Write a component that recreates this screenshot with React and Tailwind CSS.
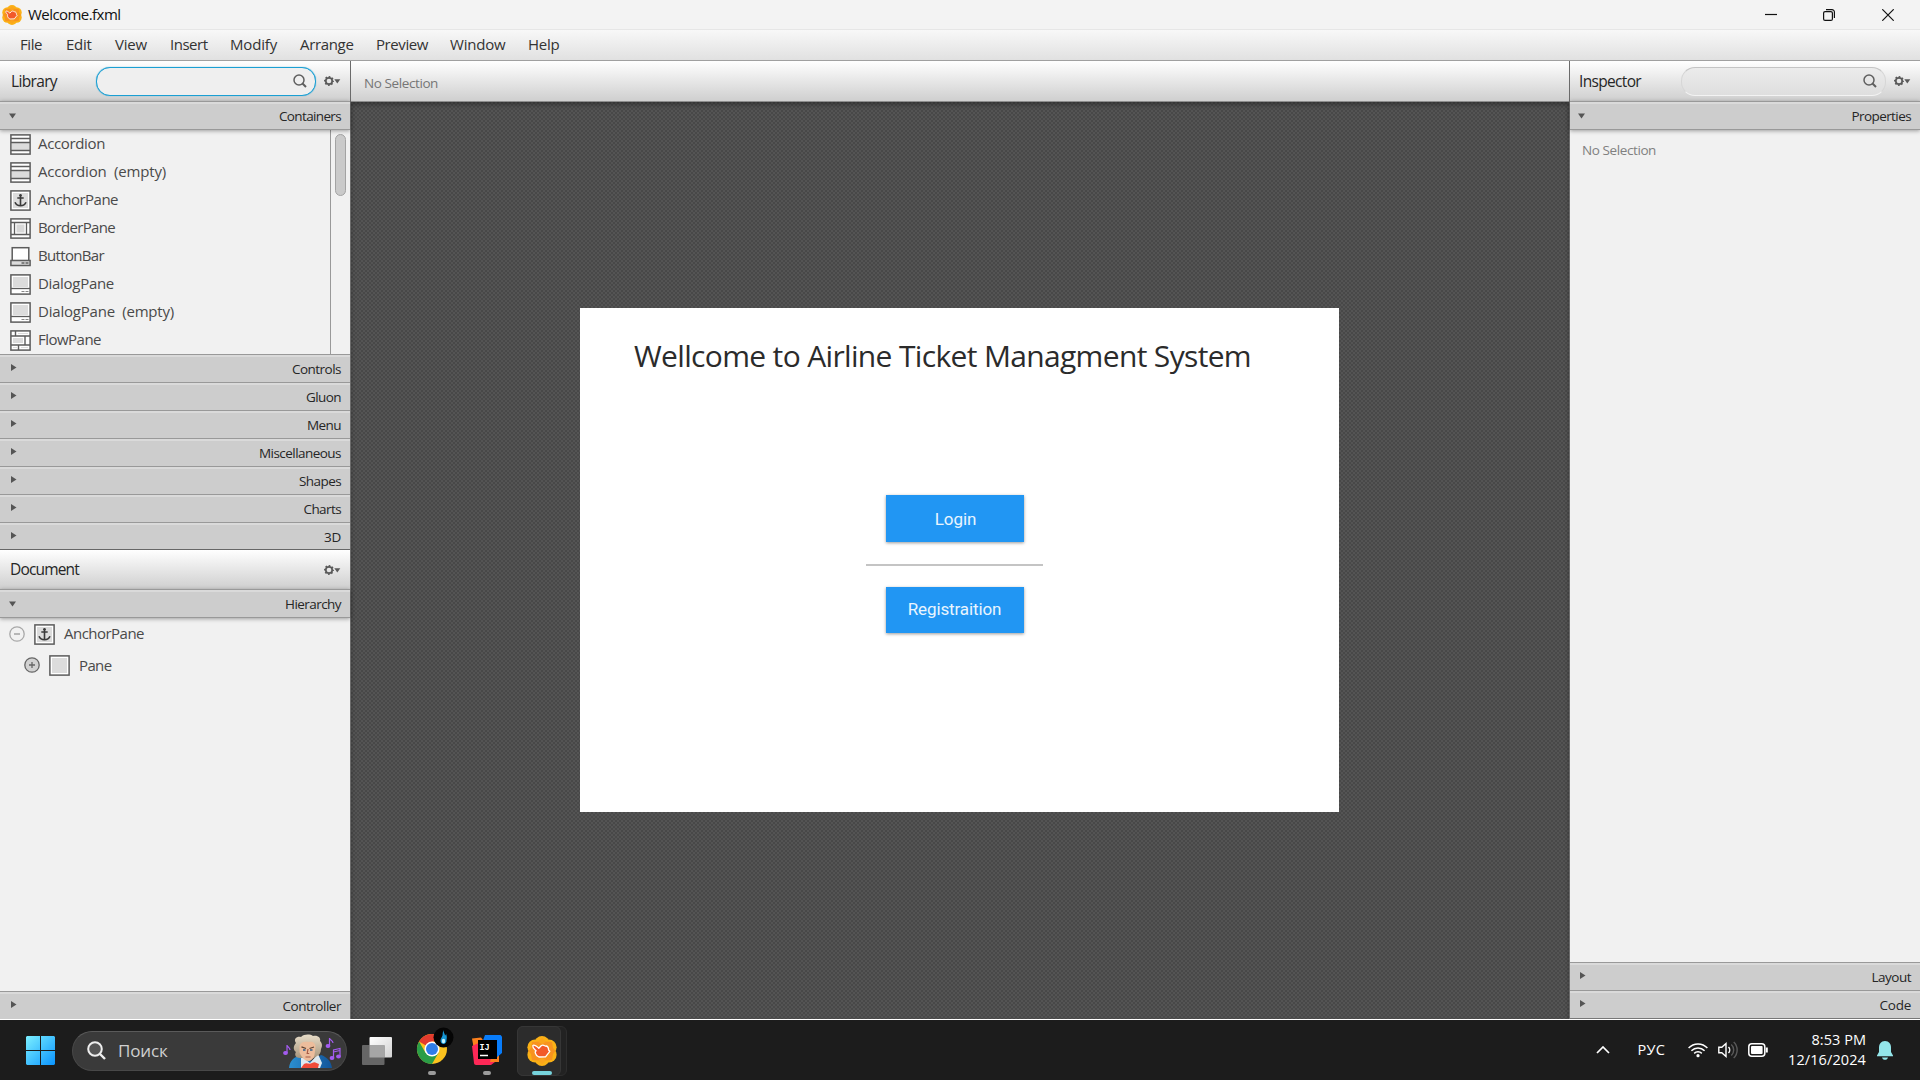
import { useLayoutEffect, useRef, useState } from "react";

/* Text whose tracking is adjusted so that it spans a given width. */
function Label({ w, className = "", children }) {
  const ref = useRef(null);
  const [spacing, setSpacing] = useState(0);
  useLayoutEffect(() => {
    const natural = ref.current.getBoundingClientRect().width;
    setSpacing((w - natural) / children.length);
  }, [w, children]);
  return (
    <span ref={ref} className={`whitespace-pre ${className}`} style={{ letterSpacing: `${spacing}px` }}>
      {children}
    </span>
  );
}

function SceneLogo({ className }) {
  return (
    <svg viewBox="0 0 30 30" className={className}>
      <g fill="#fbb116">
        <circle cx="15" cy="7.600" r="7.600" />
        <circle cx="21.800" cy="11.200" r="7.800" />
        <circle cx="21.800" cy="18.800" r="7.800" />
        <circle cx="15" cy="22.400" r="7.600" />
        <circle cx="8.200" cy="18.800" r="7.800" />
        <circle cx="8.200" cy="11.200" r="7.800" />
      </g>
      <path d="M15 3l3.500 2.500 6.500.5 1 6 2.500 3-2.500 3-1 6-6.500.5L15 27l-3.500-2.500L5 24l-1-6-2.500-3L4 12l1-6 6.500-.5z" fill="#f8931f" />
      <path d="M15 1.500l4 4.500-4 2-4-2zM15 28.500l4-4.500-4-2-4 2z" fill="#fba51c" />
      <path
        d="M5.800 9.600c1.200-1.200 2.600-.3 6 2.600l2.600-2.700c1.800-1 3 .2 4 .6 2-.5 3.300 1.600 3.200 3.900l1.200 1.300-4.300 5.500-6.600.2c-2.200-1.200-3.200-2.500-3.400-3.700-.7-1.200 0-2.200.6-2.500-1.500-1.500-3.700-2.900-3.300-5.200z"
        fill="#f2592a"
        stroke="#fff"
        strokeWidth="1.300"
        strokeLinejoin="round"
      />
    </svg>
  );
}

function SearchGlyph() {
  return (
    <svg viewBox="0 0 14 14" className="size-3.5" fill="none" stroke="#5f5f5f" strokeWidth="1.500">
      <circle cx="6" cy="6" r="5" />
      <path d="M9.500 9.500L13 13" strokeWidth="1.900" />
    </svg>
  );
}

function GearMenu() {
  return (
    <svg viewBox="0 0 17 10" className="h-2.5 w-[17px] shrink-0">
      <circle cx="5" cy="5" r="3.200" fill="none" stroke="#5a5a5a" strokeWidth="1.700" />
      <circle cx="5" cy="5" r="4.300" fill="none" stroke="#5a5a5a" strokeWidth="1.400" strokeDasharray="1.700 1.677" strokeDashoffset=".85" />
      <path d="M10.300 3.200h6L13.300 7.500z" fill="#5a5a5a" />
    </svg>
  );
}

function AnchorMark() {
  return (
    <g>
      <rect x="3" y="3" width="15" height="15" fill="#dcdcdc" />
      <path d="M10.500 5v10.500M7.300 8h6.400M5 12.300c1 2.400 2.700 3.400 5.500 3.400s4.500-1 5.500-3.400" fill="none" stroke="#3a3a3a" strokeWidth="1.600" />
      <circle cx="10.500" cy="5.200" r="1.300" fill="#3a3a3a" />
    </g>
  );
}

function NodeIcon({ kind }) {
  const dark = "#5c5c5c";
  return (
    <svg viewBox="0 0 21 21" className="size-[21px] shrink-0">
      {kind !== "buttonbar" && <rect x=".9" y=".9" width="19.200" height="19.200" fill="#fff" stroke={dark} strokeWidth="1.500" />}
      {kind === "accordion" && (
        <g>
          <rect x="2" y="9" width="17" height="7" fill="#dcdcdc" />
          <path d="M1 4.500h19M1 8.500h19M1 16.500h19" stroke={dark} strokeWidth="1.300" />
        </g>
      )}
      {kind === "anchor" && <AnchorMark />}
      {kind === "border" && (
        <g>
          <rect x="6.500" y="6.500" width="8" height="8" fill="#d8d8d8" />
          <path d="M1 4.500h19M1 16.500h19M4.500 4.500v12M16.500 4.500v12" stroke={dark} strokeWidth="1.300" />
        </g>
      )}
      {kind === "buttonbar" && (
        <g>
          <rect x="2.200" y="1.700" width="16.600" height="13" fill="#fff" stroke={dark} strokeWidth="1.500" />
          <rect x=".9" y="14.500" width="19.200" height="5" fill="#dcdcdc" stroke={dark} strokeWidth="1.500" />
          <path d="M11.500 17h3M15.500 17h3" stroke="#222" />
        </g>
      )}
      {kind === "dialog" && (
        <g>
          <rect x="3" y="3" width="15" height="10" fill="#dcdcdc" />
          <path d="M1 14.500h19" stroke={dark} strokeWidth="1.300" />
          <path d="M11.500 17.500h3M15.500 17.500h3" stroke="#888" />
        </g>
      )}
      {kind === "flow" && (
        <g>
          <rect x="3" y="8" width="10" height="5" fill="#dcdcdc" />
          <path d="M1 6h19M1 15h19M5.500 1v5M15 6v9M8.500 15v5" stroke={dark} strokeWidth="1.400" />
          <path d="M8 3.500h10M3 17.500h4M11 17.500h7" stroke="#dcdcdc" />
        </g>
      )}
      {kind === "pane" && <rect x="3" y="3" width="15" height="15" fill="#dcdcdc" />}
    </svg>
  );
}

function Bar({ title, w, open, tight }) {
  return (
    <div
      className={`flex shrink-0 items-center justify-between border-t border-[#999] bg-[linear-gradient(#dadada_2px,#cdcdcd_2px)] pr-[9px] ${
        open ? "relative h-[29px] border-b shadow-[0_1px_4px_rgba(0,0,0,0.35)]" : "h-7"
      } ${tight ? "pl-0" : "pl-px"}`}
    >
      {open ? (
        <svg viewBox="0 0 7 6" className="ml-2 h-1.5 w-[7px]">
          <path d="M0 .5h7L3.500 5.500z" fill="#555" />
        </svg>
      ) : (
        <svg viewBox="0 0 6 7" className="-mt-[2px] ml-2.5 h-[7px] w-1.5">
          <path d="M0 0v7L5.500 3.500z" fill="#555" />
        </svg>
      )}
      <Label w={w} className="text-[13.5px] leading-6 text-[#262626]">
        {title}
      </Label>
    </div>
  );
}

const menus = [
  ["File", 22, "w-[46px]"],
  ["Edit", 25.5, "w-[49px]"],
  ["View", 32, "w-[55px]"],
  ["Insert", 37.5, "w-[60px]"],
  ["Modify", 47, "w-[70px]"],
  ["Arrange", 53.5, "w-[76px]"],
  ["Preview", 52, "w-[74px]"],
  ["Window", 55.5, "w-[78px]"],
  ["Help", 31.5, "w-[54px]"],
];

const containers = [
  ["Accordion", 67, "accordion"],
  ["Accordion  (empty)", 128, "accordion"],
  ["AnchorPane", 80, "anchor"],
  ["BorderPane", 77, "border"],
  ["ButtonBar", 66, "buttonbar"],
  ["DialogPane", 76, "dialog"],
  ["DialogPane  (empty)", 136, "dialog"],
  ["FlowPane", 63, "flow"],
];

const sections = [
  ["Controls", 49],
  ["Gluon", 35],
  ["Menu", 34],
  ["Miscellaneous", 82],
  ["Shapes", 42],
  ["Charts", 37.5],
  ["3D", 17],
];

function Library() {
  return (
    <section className="flex h-[488px] flex-col">
      <div className="flex h-10 shrink-0 items-center bg-linear-to-b from-white to-[#cfcfcf] pl-[11px]">
        <Label w={46} className="pt-[2px] text-[15.5px] text-[#262626]">Library</Label>
        <div className="ml-[39px] flex h-[29px] w-[220px] items-center justify-end rounded-[14px] border-[1.5px] border-[#1b9fd3] bg-[#efefef] pr-2 shadow-[0_0_1px_#1b9fd3]">
          <SearchGlyph />
        </div>
        <div className="ml-[8px] flex"><GearMenu /></div>
      </div>
      <Bar title="Containers" w={62} open />
      <div className="flex h-56 shrink-0">
        <ul className="flex-1 overflow-hidden pl-2.5">
          {containers.map(([name, w, kind], i) => (
            <li key={i} className="flex h-7 items-center gap-[7px]">
              <NodeIcon kind={kind} />
              <Label w={w} className="pb-px text-[15px] text-[#4a4a4a]">{name}</Label>
            </li>
          ))}
        </ul>
        <div className="w-5 border-l border-[#999] pt-1 pl-1">
          <div className="h-[62px] w-[11px] rounded-full border border-[#a3a3a3] bg-[#cacaca]" />
        </div>
      </div>
      {sections.map(([t, w]) => (
        <Bar key={t} title={t} w={w} />
      ))}
    </section>
  );
}

function Doc() {
  return (
    <section className="flex flex-1 flex-col border-t border-[#666]">
      <div className="flex h-[39px] shrink-0 items-center justify-between bg-linear-to-b from-white to-[#cfcfcf] pr-[9px] pl-[10px]">
        <Label w={69} className="pt-px text-[15.5px] text-[#262626]">Document</Label>
        <GearMenu />
      </div>
      <Bar title="Hierarchy" w={56} open />
      <div className="flex-1 pl-[9px]">
        <div className="flex h-8 items-center">
          <svg viewBox="0 0 16 16" className="size-4" fill="none" stroke="#a8a8a8" strokeWidth="1.300">
            <circle cx="8" cy="8" r="7.200" />
            <path d="M5 8h6" strokeWidth="1.600" />
          </svg>
          <span className="ml-[9px]"><NodeIcon kind="anchor" /></span>
          <Label w={80} className="ml-[9px] pb-px text-[15px] text-[#4a4a4a]">AnchorPane</Label>
        </div>
        <div className="flex h-[30px] items-center pl-[15px]">
          <svg viewBox="0 0 16 16" className="size-4" fill="#d2d2d2" stroke="#666" strokeWidth="1.300">
            <circle cx="8" cy="8" r="7.200" />
            <path d="M5 8h6M8 5v6" />
          </svg>
          <span className="ml-[9px]"><NodeIcon kind="pane" /></span>
          <Label w={32.500} className="ml-[9px] text-[15px] text-[#4a4a4a]">Pane</Label>
        </div>
      </div>
      <Bar title="Controller" w={58.500} />
    </section>
  );
}

function Stage() {
  return (
    <main className="flex flex-1 flex-col border-x border-[#6b6b6b]">
      <div className="flex h-[41px] items-center border-b border-[#8d8d8d] bg-linear-to-b from-white to-[#cfcfcf] pt-1 pl-[13px]">
        <Label w={74} className="text-[13.5px] text-[#767676]">No Selection</Label>
      </div>
      <div className="flex-1 bg-[conic-gradient(#484848_25%,#545454_0_50%,#484848_0_75%,#545454_0)] bg-[length:4px_4px] pt-[206px] pl-[229px] shadow-[inset_0_3px_4px_rgba(0,0,0,0.3)]">
        <div className="flex h-[504px] w-[759px] flex-col bg-white">
          <h1 className="flex h-[95px] items-center pl-[54px]">
            <Label w={617} className="text-[30px] text-[#2b2b2b]">Wellcome to Airline Ticket Managment System</Label>
          </h1>
          <div className="mt-[92px] ml-[286px] flex w-[177px] flex-col items-center">
            <button className="h-[47px] w-[138px] bg-[#2196f3] pt-0.5 pl-0.5 font-['Roboto',sans-serif] shadow-[0_1px_3px_rgba(0,0,0,0.4)]">
              <Label w={41.5} className="text-[17px] text-white/90">Login</Label>
            </button>
            <div className="mt-[22px] h-0.5 w-full bg-[#c4c4c4]" />
            <button className="mt-[21px] h-[46px] w-[138px] bg-[#2196f3] font-['Roboto',sans-serif] shadow-[0_1px_3px_rgba(0,0,0,0.4)]">
              <Label w={93.5} className="text-[17px] text-white/90">Registraition</Label>
            </button>
          </div>
        </div>
      </div>
    </main>
  );
}

function Inspector() {
  return (
    <aside className="flex w-[350px] flex-col border-b border-[#777]">
      <div className="flex h-10 shrink-0 items-center bg-linear-to-b from-white to-[#cfcfcf] pl-[9px]">
        <Label w={62} className="pt-[2px] text-[15.5px] text-[#262626]">Inspector</Label>
        <div className="ml-[40px] flex h-[29px] w-[205px] items-center justify-end rounded-[14px] border border-t-[#c4c4c4] border-r-[#d6d6d6] border-b-[#f3f3f3] border-l-[#d6d6d6] bg-linear-to-b from-[#ececec] to-[#dedede] pr-2">
          <SearchGlyph />
        </div>
        <div className="ml-[8px] flex"><GearMenu /></div>
      </div>
      <Bar title="Properties" w={59.500} open tight />
      <div className="flex flex-1 items-start pt-[10px] pl-3">
        <Label w={74} className="text-[13.5px] leading-5 text-[#808080]">No Selection</Label>
      </div>
      <Bar title="Layout" w={39.500} tight />
      <Bar title="Code" w={31.500} tight />
    </aside>
  );
}

function Composer() {
  return (
    <svg viewBox="0 0 60 36" className="h-9 w-[60px]">
      <defs>
        <linearGradient id="coat" x1="0" x2="1">
          <stop offset="0" stopColor="#2b8fd0" />
          <stop offset="1" stopColor="#12559a" />
        </linearGradient>
        <linearGradient id="hair" x1="0" x2="0" y1="0" y2="1">
          <stop offset="0" stopColor="#e8dcc8" />
          <stop offset="1" stopColor="#a8967c" />
        </linearGradient>
      </defs>
      <path d="M6 35c1-8 5-10 9-12l13 5 10-6c6 2 10 6 11 13z" fill="url(#coat)" />
      <path d="M18 35l0-12 9 7 8-9 4 9-2 5z" fill="#dfe9f0" />
      <path d="M18 35l3-4c3-2 5 1 8-1s4 0 7 1l-1 4z" fill="#f04b3a" />
      <path d="M13 10c-3-4 1-7 5-6 3-3 9-3 12-1 5-1 8 2 7 5 3 3 2 6 1 8 0 4-2 6-4 7l-3 2H17c-4 0-6-3-4-6-3-2-3-6 0-9z" fill="url(#hair)" />
      <path d="M16.500 13c1-4 5-5 9-4 4-1 7 1 7 5l-1 8c-1 4-4 6-6 6-4 0-8-5-9-9z" fill="#edbd9c" />
      <path d="M18.500 13.800l4.500 1.700M26.500 15.500l4.500-1.500" stroke="#5c4030" strokeWidth="1.300" />
      <path d="M20 17h2.500M27 17h2.500" stroke="#2f5f8c" strokeWidth="1.400" />
      <path d="M25 16l-.8 4.500h2M22.500 24h5" stroke="#a85c46" fill="none" strokeWidth="1.200" />
      <g fill="#a45cf0" stroke="#a45cf0" strokeWidth="1.200">
        <ellipse cx="2.500" cy="20" rx="1.800" ry="1.400" />
        <path d="M4 20v-8c0 2 3 2 3 5" fill="none" />
        <ellipse cx="45" cy="13" rx="1.800" ry="1.400" />
        <path d="M46.500 13V5c0 2 3.500 2 3.500 5" fill="none" />
        <ellipse cx="49" cy="25" rx="1.800" ry="1.400" />
        <ellipse cx="55.500" cy="23.500" rx="1.800" ry="1.400" />
        <path d="M50.500 25v-8l6.500-1.500v8M50.500 19l6.500-1.500" fill="none" />
      </g>
    </svg>
  );
}

function Chrome() {
  return (
    <svg viewBox="0 0 38 38" className="h-[38px] w-[38px]">
      <circle cx="16" cy="23" r="15" fill="#fcc31e" />
      <path d="M16 23L3 15.500A15 15 0 0 1 29 15.500H16z" fill="#e33b2e" />
      <path d="M3 15.500A15 15 0 0 0 16 38l6.500-11.200L16 23 9.500 26.800z" fill="#2a9d47" />
      <circle cx="16" cy="23" r="7.500" fill="#fff" />
      <circle cx="16" cy="23" r="6" fill="#2f7de9" />
      <circle cx="27.500" cy="11.500" r="10" fill="#050505" />
      <path d="M28 4c-1 2 1 4 1 5.500 1-.5 1-1.500 1-2 1 3 1 4 .5 6.500.3 2-1.200 4-3 4s-3-1.500-3-3.500c0-2 1.500-3 2-5 .5-2-.3-3 1.500-5.500z" fill="#1597d6" />
      <ellipse cx="27.500" cy="15" rx="1.700" ry="2.200" fill="#c5f3ff" />
    </svg>
  );
}

function Idea() {
  return (
    <svg viewBox="0 0 30 30" className="size-[30px]">
      <path d="M0 3.500l9-1 4 5-1 18-9-5z" fill="#fc801d" />
      <path d="M0 11l11-5 12 21-4 3H4c-1 0-2-1-2-2z" fill="#fe2857" />
      <path d="M20 20h7v7h-9z" fill="#fc801d" />
      <path d="M13 0h15.500L30 1.500V18l-6 5L10 8z" fill="#087cfa" />
      <rect x="6" y="5" width="19" height="19" fill="#000" />
      <path d="M8 20.500h8" stroke="#fff" strokeWidth="1.500" />
      <text x="7.400" y="14.500" fill="#fff" fontSize="8.500" fontWeight="700" fontFamily="Liberation Mono, monospace">IJ</text>
    </svg>
  );
}

function Taskbar() {
  return (
    <footer className="flex h-[60px] items-center justify-between bg-[#1c1c1c] text-white">
      <div className="flex items-center pt-px">
        <svg viewBox="0 0 29 29" className="ml-[26px] size-[29px]">
          <defs>
            <linearGradient id="win" x1="0" y1="0" x2="1" y2="1">
              <stop offset="0" stopColor="#7cf0ff" />
              <stop offset="1" stopColor="#0a94ff" />
            </linearGradient>
          </defs>
          <path d="M1 0h13v14H0V1zM15 0h13l1 1v13H15zM0 15h14v14H1l-1-1zM15 15h14v13l-1 1H15z" fill="url(#win)" />
        </svg>
        <div className="ml-[17px] flex h-10 w-[275px] items-center rounded-full border border-t-[#5a5a5a] border-r-[#484848] border-b-[#484848] border-l-[#484848] bg-[#3a3a3a] pl-[14px]">
          <svg viewBox="0 0 19 19" className="size-[19px]" fill="#555" stroke="#eee" strokeWidth="2">
            <circle cx="8" cy="8" r="6.800" />
            <path d="M13 13l5 5" strokeWidth="2.400" />
          </svg>
          <Label w={49.500} className="ml-3 text-[17px] text-[#d0d0d0]">Поиск</Label>
          <div className="ml-[115px]"><Composer /></div>
        </div>
        <svg viewBox="0 0 30 28" className="ml-[15px] h-7 w-[30px]">
          <defs>
            <linearGradient id="tv" x1="0" y1="0" x2="1" y2="1">
              <stop offset="0" stopColor="#fff" />
              <stop offset="1" stopColor="#d2d2d2" />
            </linearGradient>
          </defs>
          <rect x="7.500" width="22.500" height="20.500" rx="1" fill="url(#tv)" />
          <rect y="8" width="22.500" height="20" rx="1" fill="#666" />
          <path d="M7.500 8h15v12.500h-15z" fill="#a6a6a6" />
        </svg>
        <div className="ml-6 flex h-[50px] w-[38px] flex-col justify-between pb-px">
          <Chrome />
          <span className="ml-[12px] h-1 w-2 rounded-full bg-[#9b9b9b]" />
        </div>
        <div className="ml-[18px] flex h-[50px] w-[30px] flex-col items-center justify-between pt-[9px] pb-px">
          <Idea />
          <span className="h-1 w-2 rounded-full bg-[#9b9b9b]" />
        </div>
        <div className="ml-[15px] flex h-[50px] w-[50px] rounded-md border border-[#2d2d2d] bg-[#222]">
          <div className="-mt-px -ml-px flex h-[50px] w-11 flex-col items-center justify-between rounded-md border border-[#363636] bg-[#2c2c2c] pt-[9px] pl-[5px]">
            <SceneLogo className="size-[30px]" />
            <span className="h-1 w-5 rounded-full bg-[#76d3dc]" />
          </div>
        </div>
      </div>
      <div className="flex items-center pr-[27px]">
        <svg viewBox="0 0 14 8" className="h-2 w-3.5" fill="none" stroke="#fff" strokeWidth="1.700">
          <path d="M1 7l6-6 6 6" />
        </svg>
        <Label w={27.500} className="ml-[28px] text-[14.5px]">РУС</Label>
        <svg viewBox="0 0 20 16" className="ml-[23px] h-4 w-5" fill="none" stroke="#fff" strokeWidth="1.500">
          <path d="M.6 6a13 13 0 0 1 18.800 0M3.400 8.800a9.200 9.200 0 0 1 13.200 0M6.200 11.400a5.400 5.400 0 0 1 7.600 0" />
          <circle cx="10" cy="13.700" r="1.600" fill="#fff" stroke="none" />
        </svg>
        <svg viewBox="0 0 20 18" className="ml-[10px] h-[18px] w-5" fill="none" stroke="#fff" strokeWidth="1.400">
          <path d="M.8 6.300h3L8 2.500v13l-4.200-3.800h-3zM10.500 6a4.300 4.300 0 0 1 0 6" />
          <path d="M13.300 3.500a7.500 7.500 0 0 1 0 11M15.700 1a11 11 0 0 1 0 16" stroke="#5a5a5a" />
        </svg>
        <svg viewBox="0 0 20 14" className="ml-[10px] h-3.5 w-5" fill="none" stroke="#fff" strokeWidth="1.500">
          <rect x=".8" y=".8" width="16" height="12.400" rx="3" />
          <rect x="3" y="3" width="11.600" height="8" rx="1" fill="#fff" stroke="none" />
          <path d="M18.800 4.500v5" strokeWidth="2" />
        </svg>
        <div className="ml-[20px] flex w-[78px] flex-col items-end pb-px text-[14.500px] leading-5">
          <Label w={54.500}>8:53 PM</Label>
          <Label w={78}>12/16/2024</Label>
        </div>
        <svg viewBox="0 0 16 19" className="ml-[11px] h-[19px] w-4" fill="#93e6ea">
          <path d="M8 0c4 0 6 3 6 6.500V11l2 3.500v.8H0v-.8L2 11V6.500C2 3 4 0 8 0zM5 16.500h6c-.5 1.600-1.500 2.300-3 2.300s-2.500-.7-3-2.300z" />
        </svg>
      </div>
    </footer>
  );
}

export default function App() {
  return (
    <div className="flex h-[1080px] w-[1920px] flex-col overflow-hidden bg-[#f1f1f1] font-['Open_Sans','Noto_Sans',sans-serif]">
      <header className="flex h-[29px] shrink-0 items-center justify-between bg-[#f3f3f3]">
        <div className="flex items-center">
          <SceneLogo className="ml-0.5 size-5" />
          <Label w={92.5} className="ml-1.5 pb-px text-[15px] text-[#111]">Welcome.fxml</Label>
        </div>
        <div className="flex items-center pr-[26px] text-[#111]">
          <svg viewBox="0 0 12 12" className="mr-[46px] size-3" stroke="currentColor" fill="none">
            <path d="M0 5.500h12" strokeWidth="1.200" />
          </svg>
          <svg viewBox="0 0 12 12" className="mr-[47px] size-3" stroke="currentColor" fill="none" strokeWidth="1.200">
            <rect x=".6" y="2.600" width="8.800" height="8.800" rx="1.500" />
            <path d="M3 .6h6a2.400 2.400 0 0 1 2.400 2.400v6" />
          </svg>
          <svg viewBox="0 0 12 12" className="size-3" stroke="currentColor" fill="none" strokeWidth="1.200">
            <path d="M.3.300l11.400 11.400M11.700.300L.3 11.700" />
          </svg>
        </div>
      </header>
      <nav className="flex h-8 shrink-0 items-center border-t border-b border-t-[#e6e6e6] border-b-[#a0a0a0] bg-linear-to-b from-[#f8f8f8] to-[#e1e1e1] pb-0.5 pl-5 text-[15px] text-[#333]">
        {menus.map(([name, w, cell]) => (
          <div key={name} className={cell}>
            <Label w={w}>{name}</Label>
          </div>
        ))}
      </nav>
      <div className="flex h-[958px] shrink-0">
        <aside className="flex w-[350px] flex-col">
          <Library />
          <Doc />
        </aside>
        <Stage />
        <Inspector />
      </div>
      <div className="h-px shrink-0 bg-white" />
      <Taskbar />
    </div>
  );
}
